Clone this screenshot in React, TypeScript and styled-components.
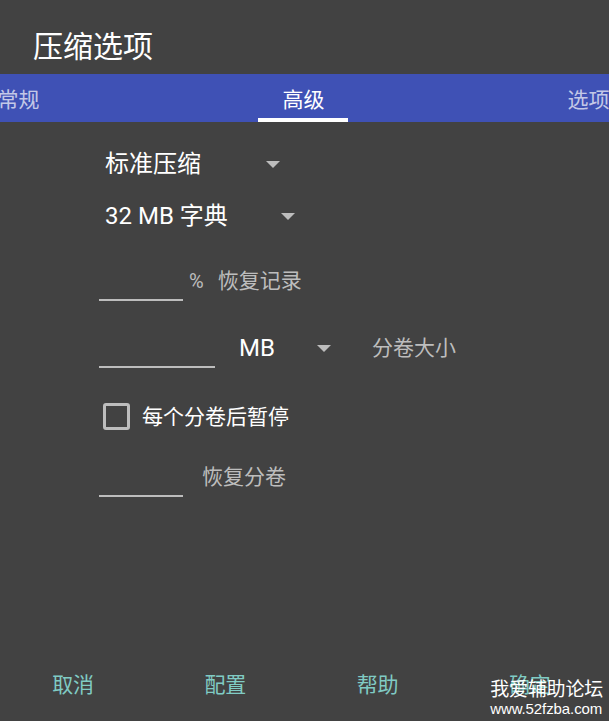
import React from "react";
import styled, { createGlobalStyle } from "styled-components";

const Global = createGlobalStyle`
  html, body { margin: 0; padding: 0; background: #424242; }
  body { font-family: Roboto, "Noto Sans CJK SC", sans-serif; }
  * { box-sizing: border-box; }
`;

const Page = styled.div`
  position: relative;
  width: 609px;
  height: 721px;
  background: #424242;
  overflow: hidden;
  display: flex;
  flex-direction: column;
  font-family: Roboto, "Noto Sans CJK SC", sans-serif;
`;

const Title = styled.div`
  height: 74px;
  padding: 25px 0 0 33px;
  font-size: 30px;
  line-height: 38px;
  color: #ffffff;
  font-family: "Noto Sans CJK SC", sans-serif;
`;

const TabBar = styled.div`
  height: 48px;
  background: #3f51b5;
  display: flex;
  overflow: hidden;
  flex-shrink: 0;
`;

const Tab = styled.div<{ $active?: boolean; $first?: boolean }>`
  position: relative;
  flex: 0 0 285px;
  margin-left: ${(p) => (p.$first ? "-124px" : "0")};
  display: flex;
  align-items: center;
  justify-content: center;
  font-size: 21px;
  font-family: "Noto Sans CJK SC", sans-serif;
  color: ${(p) => (p.$active ? "#ffffff" : "rgba(255,255,255,0.7)")};
`;

const Indicator = styled.div`
  position: absolute;
  bottom: 0;
  left: 50%;
  width: 90px;
  height: 4px;
  margin-left: -46px;
  background: #ffffff;
`;

const Content = styled.div`
  flex: 1;
  display: flex;
  flex-direction: column;
  padding: 16px 0 0 99px;
`;

const Spinner = styled.div`
  height: 52px;
  display: flex;
  align-items: center;
  padding-left: 6px;
`;

const SpinnerLabel = styled.span<{ $width: number; $size?: number }>`
  width: ${(p) => p.$width}px;
  font-size: ${(p) => p.$size ?? 24}px;
  line-height: 30px;
  color: #ffffff;
  white-space: nowrap;
`;

const Row = styled.div<{ $height: number }>`
  height: ${(p) => p.$height}px;
  display: flex;
  align-items: center;
`;

const Field = styled.div<{ $width: number }>`
  width: ${(p) => p.$width}px;
  height: 40px;
  border-bottom: 2px solid #bdbdbd;
  flex-shrink: 0;
`;

const Hint = styled.span<{ $gap: number }>`
  margin-left: ${(p) => p.$gap}px;
  font-size: 21px;
  line-height: 28px;
  color: #bdbdbd;
  white-space: nowrap;
`;

const Percent = styled.span`
  margin-left: 6px;
  font-size: 20px;
  line-height: 28px;
  color: #bdbdbd;
  font-family: Roboto, sans-serif;
`;

const InlineSpinner = styled.div`
  margin-left: 24px;
  display: flex;
  align-items: center;
`;

const CheckRow = styled.div`
  height: 81px;
  display: flex;
  align-items: center;
  padding-left: 4px;
`;

const Box = styled.div`
  width: 27px;
  height: 27px;
  border: 3px solid #bdbdbd;
  border-radius: 3px;
  flex-shrink: 0;
`;

const CheckLabel = styled.span`
  margin-left: 12px;
  font-size: 21px;
  line-height: 28px;
  color: #ffffff;
`;

const ButtonBar = styled.div`
  height: 48px;
  margin: 0 0 14px -3px;
  display: grid;
  grid-template-columns: repeat(4, 152.25px);
  align-items: center;
`;

const FlatButton = styled.div`
  text-align: center;
  font-size: 21px;
  line-height: 28px;
  color: #80cbc4;
  font-family: "Noto Sans CJK SC", sans-serif;
`;

const Watermark = styled.div`
  position: absolute;
  right: 6px;
  bottom: 3px;
  display: flex;
  flex-direction: column;
  align-items: flex-start;
  color: #ffffff;
`;

const WatermarkTitle = styled.span`
  font-family: "Noto Sans CJK SC", sans-serif;
  font-size: 19px;
  line-height: 24px;
  font-weight: 400;
  letter-spacing: -0.2px;
`;

const WatermarkUrl = styled.span`
  font-family: "Liberation Sans", Arial, sans-serif;
  font-size: 15px;
  line-height: 18px;
  letter-spacing: -0.1px;
`;

const Arrow = () => (
  <svg width="14" height="7" viewBox="0 0 14 7" style={{ display: "block" }}>
    <path d="M0 0 L14 0 L7 7 Z" fill="#bdbdbd" />
  </svg>
);

export default function App() {
  return (
    <>
      <Global />
      <Page>
        <Title>压缩选项</Title>
        <TabBar>
          <Tab $first>常规</Tab>
          <Tab $active>
            高级
            <Indicator />
          </Tab>
          <Tab>选项</Tab>
        </TabBar>
        <Content>
          <Spinner>
            <SpinnerLabel $width={161}>标准压缩</SpinnerLabel>
            <Arrow />
          </Spinner>
          <Spinner>
            <SpinnerLabel $width={176}>32 MB 字典</SpinnerLabel>
            <Arrow />
          </Spinner>
          <Row $height={78}>
            <Field $width={84} />
            <Percent>%</Percent>
            <Hint $gap={14}>恢复记录</Hint>
          </Row>
          <Row $height={56}>
            <Field $width={116} />
            <InlineSpinner>
              <SpinnerLabel $width={78}>MB</SpinnerLabel>
              <Arrow />
            </InlineSpinner>
            <Hint $gap={41}>分卷大小</Hint>
          </Row>
          <CheckRow>
            <Box />
            <CheckLabel>每个分卷后暂停</CheckLabel>
          </CheckRow>
          <Row $height={40}>
            <Field $width={84} />
            <Hint $gap={19}>恢复分卷</Hint>
          </Row>
        </Content>
        <ButtonBar>
          <FlatButton>取消</FlatButton>
          <FlatButton>配置</FlatButton>
          <FlatButton>帮助</FlatButton>
          <FlatButton>确定</FlatButton>
        </ButtonBar>
        <Watermark>
          <WatermarkTitle>我爱辅助论坛</WatermarkTitle>
          <WatermarkUrl>www.52fzba.com</WatermarkUrl>
        </Watermark>
      </Page>
    </>
  );
}
